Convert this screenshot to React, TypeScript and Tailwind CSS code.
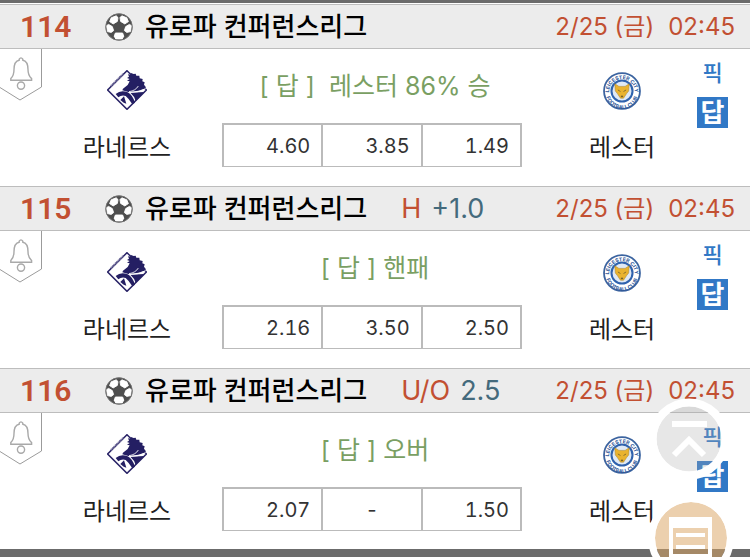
type Match = {
  id: number;
  league: string;
  line?: { kind: string; value: string };
  date: string;
  time: string;
  home: string;
  away: string;
  answer: string;
  odds: string[];
};

const matches: Match[] = [
  {
    id: 114,
    league: '유로파 컨퍼런스리그',
    date: '2/25 (금)',
    time: '02:45',
    home: '라네르스',
    away: '레스터',
    answer: '[ 답 ]  레스터 86% 승',
    odds: ['4.60', '3.85', '1.49'],
  },
  {
    id: 115,
    league: '유로파 컨퍼런스리그',
    line: { kind: 'H', value: '+1.0' },
    date: '2/25 (금)',
    time: '02:45',
    home: '라네르스',
    away: '레스터',
    answer: '[ 답 ] 핸패',
    odds: ['2.16', '3.50', '2.50'],
  },
  {
    id: 116,
    league: '유로파 컨퍼런스리그',
    line: { kind: 'U/O', value: '2.5' },
    date: '2/25 (금)',
    time: '02:45',
    home: '라네르스',
    away: '레스터',
    answer: '[ 답 ] 오버',
    odds: ['2.07', '-', '1.50'],
  },
];

function SoccerBall() {
  return (
    <svg viewBox="0 0 28 28" className="size-7 shrink-0" aria-hidden="true">
      <circle cx="14" cy="14" r="13.5" fill="#4f4f4f" />
      <g fill="#fff" stroke="#fff" strokeWidth="0.9" strokeLinejoin="round">
        <path d="M6.2 4.8 11.2 2.8 13 4.6 12.4 8.4 8.2 10.9 4.6 8.6Z" />
        <path d="M21.8 4.8 16.8 2.8 15 4.6 15.6 8.4 19.8 10.9 23.4 8.6Z" />
        <path d="M1.6 12.6 3.6 11.4 7.3 13.6 8.6 17.6 6.2 19.4 2.4 18.6Z" />
        <path d="M26.4 12.6 24.4 11.4 20.7 13.6 19.4 17.6 21.8 19.4 25.6 18.6Z" />
        <path d="M10.4 20H17.6L18.8 23.2 17.2 26H10.8L9.2 23.2Z" />
      </g>
      <path d="M14 9.6 18.4 12.8 16.8 18H11.2L9.6 12.8Z" fill="#4f4f4f" />
      <circle cx="14" cy="14" r="13.3" fill="none" stroke="#777" strokeWidth="0.8" />
    </svg>
  );
}

function BellRibbon() {
  return (
    <button type="button" aria-label="알림" className="block h-[52px] w-[42px]">
      <svg viewBox="0 0 42 52" className="size-full" fill="none">
        <path d="M41.5 0V38L20 51 0 38.5" stroke="#9b9b9b" />
        <g stroke="#a9a9a9" strokeWidth="1.4">
          <path d="M10.8 31.2V29.6Q14 26.5 14 20.5C14 14.5 16 11.8 19.2 11.2V10.2Q21 7.6 22.8 10.2V11.2C26 11.8 28 14.5 28 20.5Q28 26.5 31.6 29.6V31.2Z" />
          <circle cx="21" cy="36.6" r="3.6" />
        </g>
      </svg>
    </button>
  );
}

function HomeLogo() {
  return (
    <svg viewBox="0 0 120 120" className="size-10" role="img" aria-label="라네르스">
      <path d="M60 2 118 60 60 118 2 60Z" fill="#fff" stroke="#2b2568" strokeWidth="4.5" />
      <path
        fill="#241f63"
        d="M60 24 66 20 63 13 72 14 70 8 80 12 86 11 88 17 97 17 98 25 107 27 106 34 113 37 111 44 117 52 112 56Q100 63 84 64L64 66 46 61 48 56 62 45 68 34 60 32 68 27Z"
      />
      <path fill="#241f63" d="M26 72Q42 58 62 67 76 74 84 98L76 103Q66 86 56 78 44 74 34 82Z" />
      <path fill="#241f63" d="M70 68 112 66 86 93Q82 78 70 68Z" />
      <path d="M66 65Q86 62 94 48M66 68Q94 68 116 56" fill="none" stroke="#fff" strokeWidth="2.5" />
      <path d="M40 90 51 79 58 101 50 98Z" fill="#241f63" />
      <path d="M12 48 48 12" stroke="#77739f" strokeWidth="6" strokeDasharray="4 2" />
    </svg>
  );
}

function AwayLogo({ id }: { id: number }) {
  return (
    <svg viewBox="0 0 74 74" className="size-[38px]" role="img" aria-label="레스터">
      <circle cx="37" cy="37" r="35" fill="#fff" stroke="#3c64a0" strokeWidth="3.5" />
      <circle cx="37" cy="37" r="20.5" fill="#dfe9f5" stroke="#2f62ad" strokeWidth="4" />
      <defs>
        <path id={`crest-top-${id}`} d="M13 46A25 25 0 1 1 61 46" />
        <path id={`crest-bottom-${id}`} d="M5 40A32 32 0 0 0 69 40" />
      </defs>
      <g fill="#2c5597" className="font-['Inter'] text-[10px] font-bold" textAnchor="middle">
        <text>
          <textPath href={`#crest-top-${id}`} startOffset="50%">
            LEICESTER CITY
          </textPath>
        </text>
        <text>
          <textPath href={`#crest-bottom-${id}`} startOffset="50%">
            FOOTBALL CLUB
          </textPath>
        </text>
      </g>
      <path d="M23 23 31 28H43L51 23 50 37 46 42 40 51H34L28 42 24 37Z" fill="#e9b32f" stroke="#a8842e" />
      <path d="M29 35 34 38M45 35 40 38M35 47H39L37 49Z" stroke="#6b5a2c" strokeWidth="1.5" fill="#4c462f" />
    </svg>
  );
}

function MatchHeader({ match }: { match: Match }) {
  return (
    <header className="mt-px flex h-[45px] items-center border-y border-[#bdbdbd] bg-[#ececec] pr-[15px] pl-5">
      <span className="w-[85px] font-['Roboto'] text-[30px] leading-none font-semibold text-[#c25032]">
        {match.id}
      </span>
      <SoccerBall />
      <h2 className="ml-3 text-[26px] leading-none font-medium text-black">{match.league}</h2>
      {match.line && (
        <p className="ml-[34px] flex gap-[10px] text-[27px] leading-none">
          <span className="text-[#c25032]">{match.line.kind}</span>
          <span className="text-[#446a7c]">{match.line.value}</span>
        </p>
      )}
      <p className="ml-auto flex gap-[14px] text-2xl leading-none text-[#c25032]">
        <span>{match.date}</span>
        <time>{match.time}</time>
      </p>
    </header>
  );
}

function Odds({ match }: { match: Match }) {
  return (
    <table className="h-11 w-full table-fixed border-collapse border-2 border-b border-[#bbb]" aria-label="배당률">
      <tbody>
        <tr>
          {match.odds.map((odd, i) => (
            <td
              key={i}
              className={`border-x-2 border-[#bbb] text-xl leading-none tabular-nums text-[#333] ${
                odd === '-' ? 'text-center' : 'pr-[11px] text-right'
              }`}
            >
              {odd}
            </td>
          ))}
        </tr>
      </tbody>
    </table>
  );
}

function MatchRow({ match }: { match: Match }) {
  return (
    <article>
      <MatchHeader match={match} />
      <div className="grid h-[136px] grid-cols-[42px_minmax(0,180fr)_300px_minmax(0,175fr)_53px] text-2xl leading-none">
        <BellRibbon />
        <div className="flex flex-col items-center gap-[26px] pt-[21px] pr-[10px] text-[#222]">
          <HomeLogo />
          <span>{match.home}</span>
        </div>
        <div className="flex flex-col gap-6 pt-[25px]">
          <p className="pl-[6px] text-center text-[25px] leading-none whitespace-pre text-[#7a9f63]">{match.answer}</p>
          <Odds match={match} />
        </div>
        <div className="flex flex-col items-center gap-[26px] pt-[23px] pl-[25px] text-[#222]">
          <AwayLogo id={match.id} />
          <span>{match.away}</span>
        </div>
        <div className="flex flex-col items-start gap-3 pt-3 text-[22px] text-[#3178c6]">
          <button type="button" className="h-6 w-[31px] font-medium">
            픽
          </button>
          <button type="button" className="h-[31px] w-[31px] bg-[#3178c6] text-[26px] leading-none font-bold text-white">
            답
          </button>
        </div>
      </div>
    </article>
  );
}

function FloatingButtons() {
  return (
    <>
      <button type="button" aria-label="맨 위로" className="fixed right-5 bottom-[77px] size-[82px]">
        <svg viewBox="0 0 82 82" className="size-full" fill="none">
          <circle cx="41" cy="41" r="32.5" fill="#aaa" fillOpacity="0.28" />
          <circle cx="41" cy="41" r="36.5" stroke="#fff" strokeWidth="8" />
          <path d="M24 26H59M26 57 41 42 56 57" stroke="#fff" strokeWidth="6" />
        </svg>
      </button>
      <button type="button" aria-label="목록" className="fixed right-4 -bottom-6 size-[86px]">
        <svg viewBox="0 0 86 86" className="size-full" fill="none">
          <circle cx="43" cy="43" r="36" fill="#daa563" fillOpacity="0.52" />
          <circle cx="43" cy="43" r="39.5" stroke="#fff" strokeWidth="7" />
          <path
            fill="#fff"
            fillRule="evenodd"
            d="M21 22H64V66H21ZM25 33V59H60V33Z"
          />
          <path d="M28 40H57M28 52H57" stroke="#fff" strokeWidth="4" />
        </svg>
      </button>
    </>
  );
}

export default function App() {
  return (
    <main className="overflow-hidden border-t-3 border-b-8 border-[#6b6b6b] bg-white font-['Inter','Noto_Sans_CJK_KR',sans-serif]">
      {matches.map((match) => (
        <MatchRow key={match.id} match={match} />
      ))}
      <FloatingButtons />
    </main>
  );
}
